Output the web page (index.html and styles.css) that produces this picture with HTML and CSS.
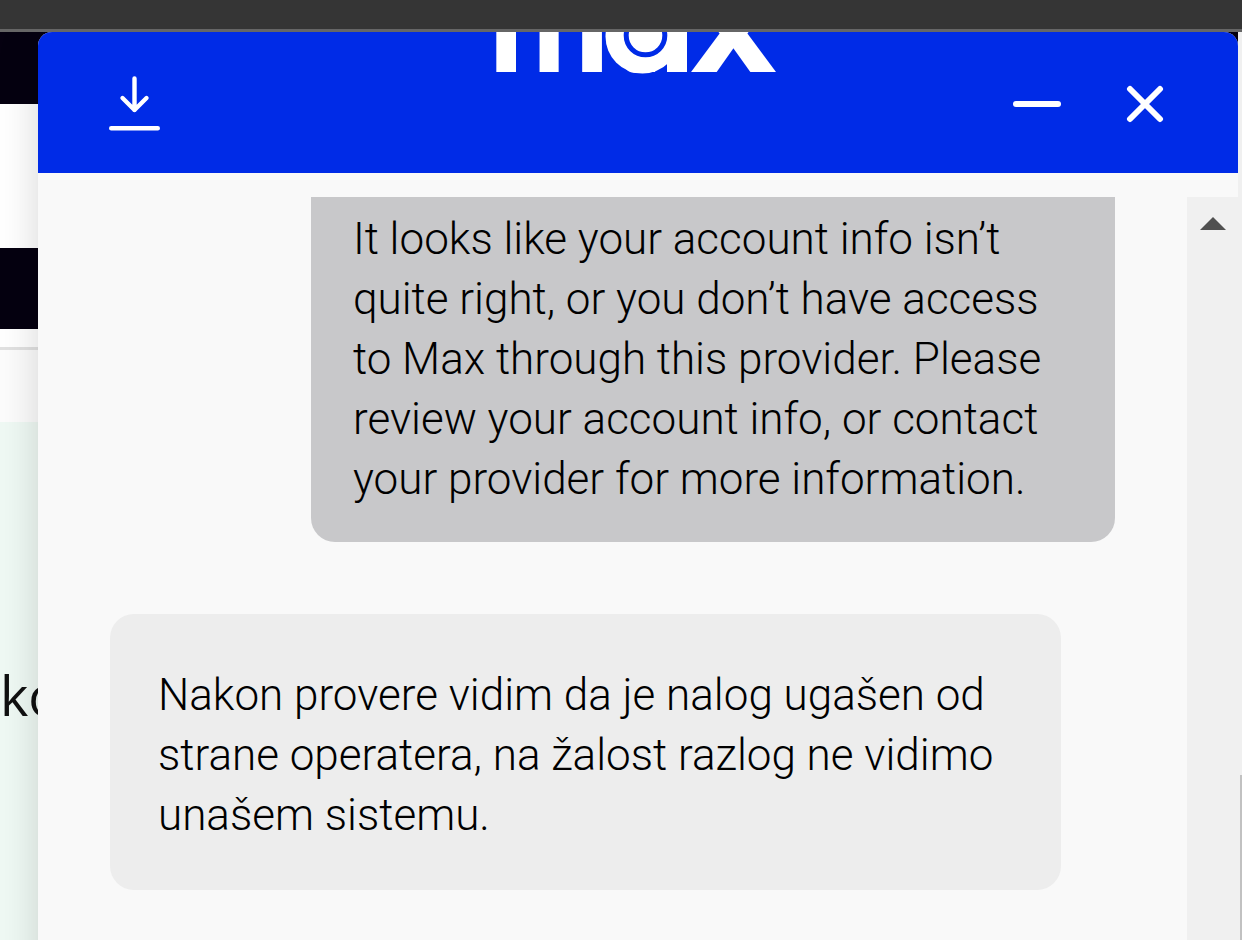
FILE: index.html
```
<!DOCTYPE html>
<html lang="sr">
<head>
    <meta charset="UTF-8">
    <title>Max chat</title>
    <link rel="stylesheet" href="styles.css">
</head>
<body>
    <div class="browser-bar"></div>
    <div class="stage">
        <div class="site">
            <div class="site-nav"></div>
            <div class="site-gap"></div>
            <div class="site-banner"></div>
            <div class="site-tabs"></div>
            <div class="site-head"></div>
            <div class="site-body">ko</div>
            <div class="site-scroll"><div class="site-thumb"></div></div>
        </div>

        <main class="chat">
            <header class="chat-header">
                <button class="icon-button" aria-label="Download">
                    <svg width="53" height="56" viewBox="0 0 53 56" fill="none" stroke="#fff" stroke-width="4.4" stroke-linecap="round" stroke-linejoin="round">
                        <path d="M26.5 3.5V35M14.5 23L26.5 35L38.5 23M3.2 53.3H49.8"/>
                    </svg>
                </button>
                <svg class="logo" width="284" height="44" viewBox="0 0 284 44" role="img" aria-label="max">
                    <text y="40"><tspan x="-6">m</tspan><tspan class="logo-a" x="128">a</tspan><tspan class="logo-x" x="195">x</tspan></text>
                    <rect x="173" y="0" width="20" height="40"/>
                    <circle cx="148.5" cy="4.5" r="37"/>
                    <circle class="logo-ring" cx="151.5" cy="3.5" r="19.3"/>
                </svg>
                <div class="window-buttons">
                    <button class="icon-button" aria-label="Minimize">
                        <svg width="48" height="38" viewBox="0 0 48 38" stroke="#fff" stroke-width="6" stroke-linecap="round">
                            <path d="M3 19H45"/>
                        </svg>
                    </button>
                    <button class="icon-button" aria-label="Close">
                        <svg width="38" height="38" viewBox="0 0 38 38" stroke="#fff" stroke-width="6" stroke-linecap="round">
                            <path d="M4 4L34 34M34 4L4 34"/>
                        </svg>
                    </button>
                </div>
            </header>

            <div class="chat-body">
                <div class="messages">
                    <p class="message message-user">It looks like your account info isn’t<br>quite right, or you don’t have access<br>to Max through this provider. Please<br>review your account info, or contact<br>your provider for more information.</p>
                    <p class="message message-agent">Nakon provere vidim da je nalog ugašen od<br>strane operatera, na žalost razlog ne vidimo<br>unašem sistemu.</p>
                </div>
                <div class="scrollbar">
                    <svg width="26" height="13" viewBox="0 0 26 13"><path d="M13 0L26 13H0Z" fill="#505050"/></svg>
                </div>
            </div>
        </main>
    </div>
</body>
</html>
```
FILE: styles.css
```
* {
    box-sizing: border-box;
}

body {
    margin: 0;
    height: 100vh;
    display: flex;
    flex-direction: column;
    overflow: hidden;
    font-family: Roboto, sans-serif;
    color: #000;
}

.browser-bar {
    flex: none;
    height: 32px;
    background: #353535;
    border-bottom: 3px solid #666;
}

/* the site and the chat window share one cell, chat on top */
.stage {
    flex: 1;
    min-height: 0;
    display: grid;
    grid-template: minmax(0, 1fr) / minmax(0, 1fr);
}

.site,
.chat {
    grid-area: 1 / 1;
}

.site {
    display: grid;
    grid-template-columns: 1fr 4px;
    grid-template-rows: 72px 144px 81px 21px 72px 1fr;
    background: #fff;
}

.site-nav,
.site-banner {
    background: #050010;
}

.site-tabs {
    border-bottom: 3px solid #e1e1e1;
}

.site-head {
    background: #fcfcfc;
}

.site-body {
    padding-top: 233px;
    background: #eff9f4;
    color: #111;
    font: 500 54px/80px "Open Sans", sans-serif;
}

.site-scroll {
    grid-column: 2;
    grid-row: 1 / -1;
    display: flex;
    padding: 743px 0 0 2px;
    background: #f0f0f0;
}

.site-thumb {
    flex: 1;
    background: #c1c1c1;
}

/* runs past the bottom edge so the shadow does not fade out there */
.chat {
    z-index: 1;
    display: flex;
    flex-direction: column;
    margin: 0 4px -48px 38px;
    background: #f9f9f9;
    border-radius: 14px 14px 0 0;
    box-shadow: 0 0 42px rgba(0, 0, 0, 0.16);
    clip-path: inset(0 0 0 -38px);
}

.chat-header {
    flex: none;
    display: grid;
    grid-template-columns: 1fr auto 1fr;
    align-items: start;
    height: 141px;
    padding: 0 74px 0 70px;
    background: #002be7;
    border-radius: 14px 14px 0 0;
}

.icon-button {
    display: block;
    padding: 0;
    border: none;
    background: none;
    cursor: pointer;
}

.icon-button svg,
.scrollbar svg,
.logo {
    display: block;
}

.chat-header > .icon-button {
    justify-self: start;
    margin-top: 43px;
}

.logo {
    fill: #fff;
    overflow: hidden;
    font: 700 134px Inter, sans-serif;
}

.logo-a {
    font-size: 64px;
}

.logo-x {
    font-family: "DejaVu Sans", sans-serif;
    font-size: 138px;
}

.logo-ring {
    fill: none;
    stroke: #002be7;
    stroke-width: 5;
}

.window-buttons {
    display: flex;
    justify-content: flex-end;
    gap: 65px;
    margin-top: 53px;
}

.chat-body {
    flex: 1;
    min-height: 0;
    display: flex;
    padding-top: 24px;
}

.messages {
    flex: 1;
    display: flex;
    flex-direction: column;
    gap: 72px;
    padding: 0 72px;
    overflow: hidden;
}

.message {
    margin: 0;
    font-size: 44px;
    font-weight: 300;
    line-height: 60px;
    white-space: nowrap;
}

.message-user {
    align-self: flex-end;
    width: 80%;
    padding: 12px 42px 33px;
    background: #c8c8ca;
    border-radius: 0 0 24px 24px;
}

.message-agent {
    margin-right: 54px;
    padding: 51px 48px 45px;
    background: #ededed;
    border-radius: 24px;
}

.scrollbar {
    width: 51px;
    padding: 20px 13px;
    background: #f0f0f0;
}
```
